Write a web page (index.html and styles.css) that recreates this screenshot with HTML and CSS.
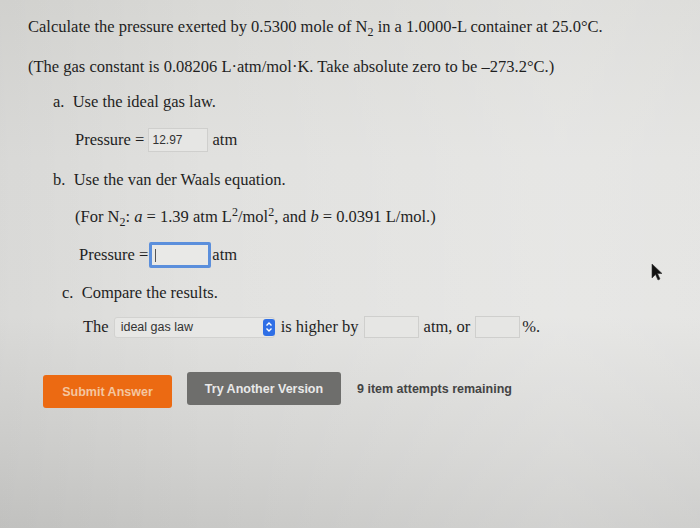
FILE: index.html
```html
<!DOCTYPE html>
<html>
<head>
<meta charset="utf-8">
<link rel="stylesheet" href="styles.css">
</head>
<body>
<div class="page">
  <div class="content">
    <p class="line l1">Calculate the pressure exerted by 0.5300 mole of N<sub>2</sub> in a 1.0000-L container at 25.0°C.</p>
    <p class="line l2">(The gas constant is 0.08206 L·atm/mol·K. Take absolute zero to be –273.2°C.)</p>
    <p class="line l3 ia">a.&nbsp; Use the ideal gas law.</p>
    <div class="line row r1">Pressure =&nbsp;<span class="box filled">12.97</span><span class="unit">atm</span></div>
    <p class="line l3 ib">b.&nbsp; Use the van der Waals equation.</p>
    <p class="line r2">(For N<sub>2</sub>: <i>a</i> = 1.39 atm L<sup>2</sup>/mol<sup>2</sup>, and <i>b</i> = 0.0391 L/mol.)</p>
    <div class="line row r3">Pressure =<span class="box focus"><span class="caret"></span></span>atm</div>
    <p class="line ic">c.&nbsp; Compare the results.</p>
    <div class="line row r4">The <span class="select">ideal gas law<span class="arrows"><svg width="8" height="12" viewBox="0 0 8 12"><path d="M1.5 4.5 L4 2 L6.5 4.5 M1.5 7.5 L4 10 L6.5 7.5" fill="none" stroke="#fff" stroke-width="1.4"/></svg></span></span> is higher by <span class="box small"></span> atm, or <span class="box small s2"></span>%.</div>
    <div class="actions">
      <span class="btn submit">Submit Answer</span>
      <span class="btn another">Try Another Version</span>
      <span class="remaining">9 item attempts remaining</span>
    </div>
  </div>
  <svg class="cursor" width="14" height="20" viewBox="0 0 14 20"><path d="M2 1 L2 15 L5.5 11.5 L8 17 L10 16 L7.5 10.5 L12 10.5 Z" fill="#111" stroke="#333" stroke-width="0.6"/></svg>
</div>
</body>
</html>
```
FILE: styles.css
```css
html, body {
  margin: 0;
  padding: 0;
}
.page {
  position: relative;
  width: 700px;
  height: 528px;
  overflow: hidden;
  background: linear-gradient(180deg, #d9d9d6 0%, #e1e1df 30%, #e2e2e0 60%, #d3d3d1 85%, #c8c8c6 100%);
  font-family: "Liberation Serif", "Times New Roman", serif;
  color: #1f1f1f;
}
.page::after {
  content: "";
  position: absolute;
  inset: 0;
  background: linear-gradient(90deg, rgba(0,0,0,0.04) 0%, rgba(255,255,255,0) 30%, rgba(255,255,255,0.18) 80%, rgba(255,255,255,0.12) 100%);
  pointer-events: none;
}
.content {
  position: relative;
  z-index: 1;
  padding: 17px 0 0 28px;
}
.line {
  margin: 0;
  font-size: 16.5px;
  line-height: 20px;
  height: 20px;
  white-space: nowrap;
}
sub, sup {
  font-size: 12px;
  line-height: 0;
}
.l2 { margin-top: 20px; }
.ia { margin-top: 15px; margin-left: 25px; }
.r1 { margin-top: 18px; margin-left: 47px; }
.ib { margin-top: 20px; margin-left: 25px; }
.r2 { margin-top: 17px; margin-left: 47px; }
.r3 { margin-top: 18px; margin-left: 51px; }
.ic { margin-top: 18px; margin-left: 34px; }
.r4 { margin-top: 14px; margin-left: 55px; }
.row {
  display: flex;
  align-items: center;
}
.box {
  display: inline-block;
  box-sizing: border-box;
  height: 24px;
  border: 1px solid #cfcfcd;
  background: #e6e6e4;
  font-family: "Liberation Sans", Arial, sans-serif;
  font-size: 12px;
  line-height: 22px;
  color: #333;
}
.filled {
  width: 60px;
  padding-left: 3px;
  margin-right: 4px;
}
.focus {
  width: 62px;
  height: 26px;
  border: 3px solid #5b8fdc;
  border-radius: 2px;
  background: #e9e9e7;
  margin: 0 1px 0 1px;
  display: flex;
  align-items: center;
  padding-left: 3px;
}
.caret {
  width: 1px;
  height: 13px;
  background: #555;
}
.select {
  display: inline-flex;
  align-items: center;
  justify-content: space-between;
  box-sizing: border-box;
  width: 161px;
  height: 21px;
  margin: 0 6px 0 5px;
  padding-left: 6px;
  border: 1px solid #d2d2d0;
  border-radius: 3px;
  background: #e7e7e5;
  font-family: "Liberation Sans", Arial, sans-serif;
  font-size: 12.5px;
  color: #333;
}
.arrows {
  display: flex;
  align-items: center;
  justify-content: center;
  width: 12px;
  height: 17px;
  margin-right: -1px;
  border-radius: 3px;
  background: #2f6fe6;
}
.small {
  width: 55px;
  height: 22px;
  margin: 0 5px;
}
.s2 { width: 45px; margin-right: 2px; }
.actions {
  display: flex;
  align-items: center;
  margin-top: 33px;
  margin-left: 15px;
  font-family: "Liberation Sans", Arial, sans-serif;
  font-weight: bold;
  font-size: 12.5px;
}
.btn {
  display: flex;
  align-items: center;
  justify-content: center;
  box-sizing: border-box;
  height: 33px;
  border-radius: 3px;
}
.submit {
  width: 129px;
  background: #ec6a12;
  color: #f4c6a0;
  margin-top: 5px;
}
.another {
  width: 154px;
  margin-left: 15px;
  background: #6e6e6c;
  color: #e9e9e9;
  margin-top: -1px;
}
.remaining {
  margin-left: 16px;
  color: #444;
  font-size: 12.5px;
}
.cursor {
  position: absolute;
  left: 650px;
  top: 263px;
  z-index: 2;
}
```
